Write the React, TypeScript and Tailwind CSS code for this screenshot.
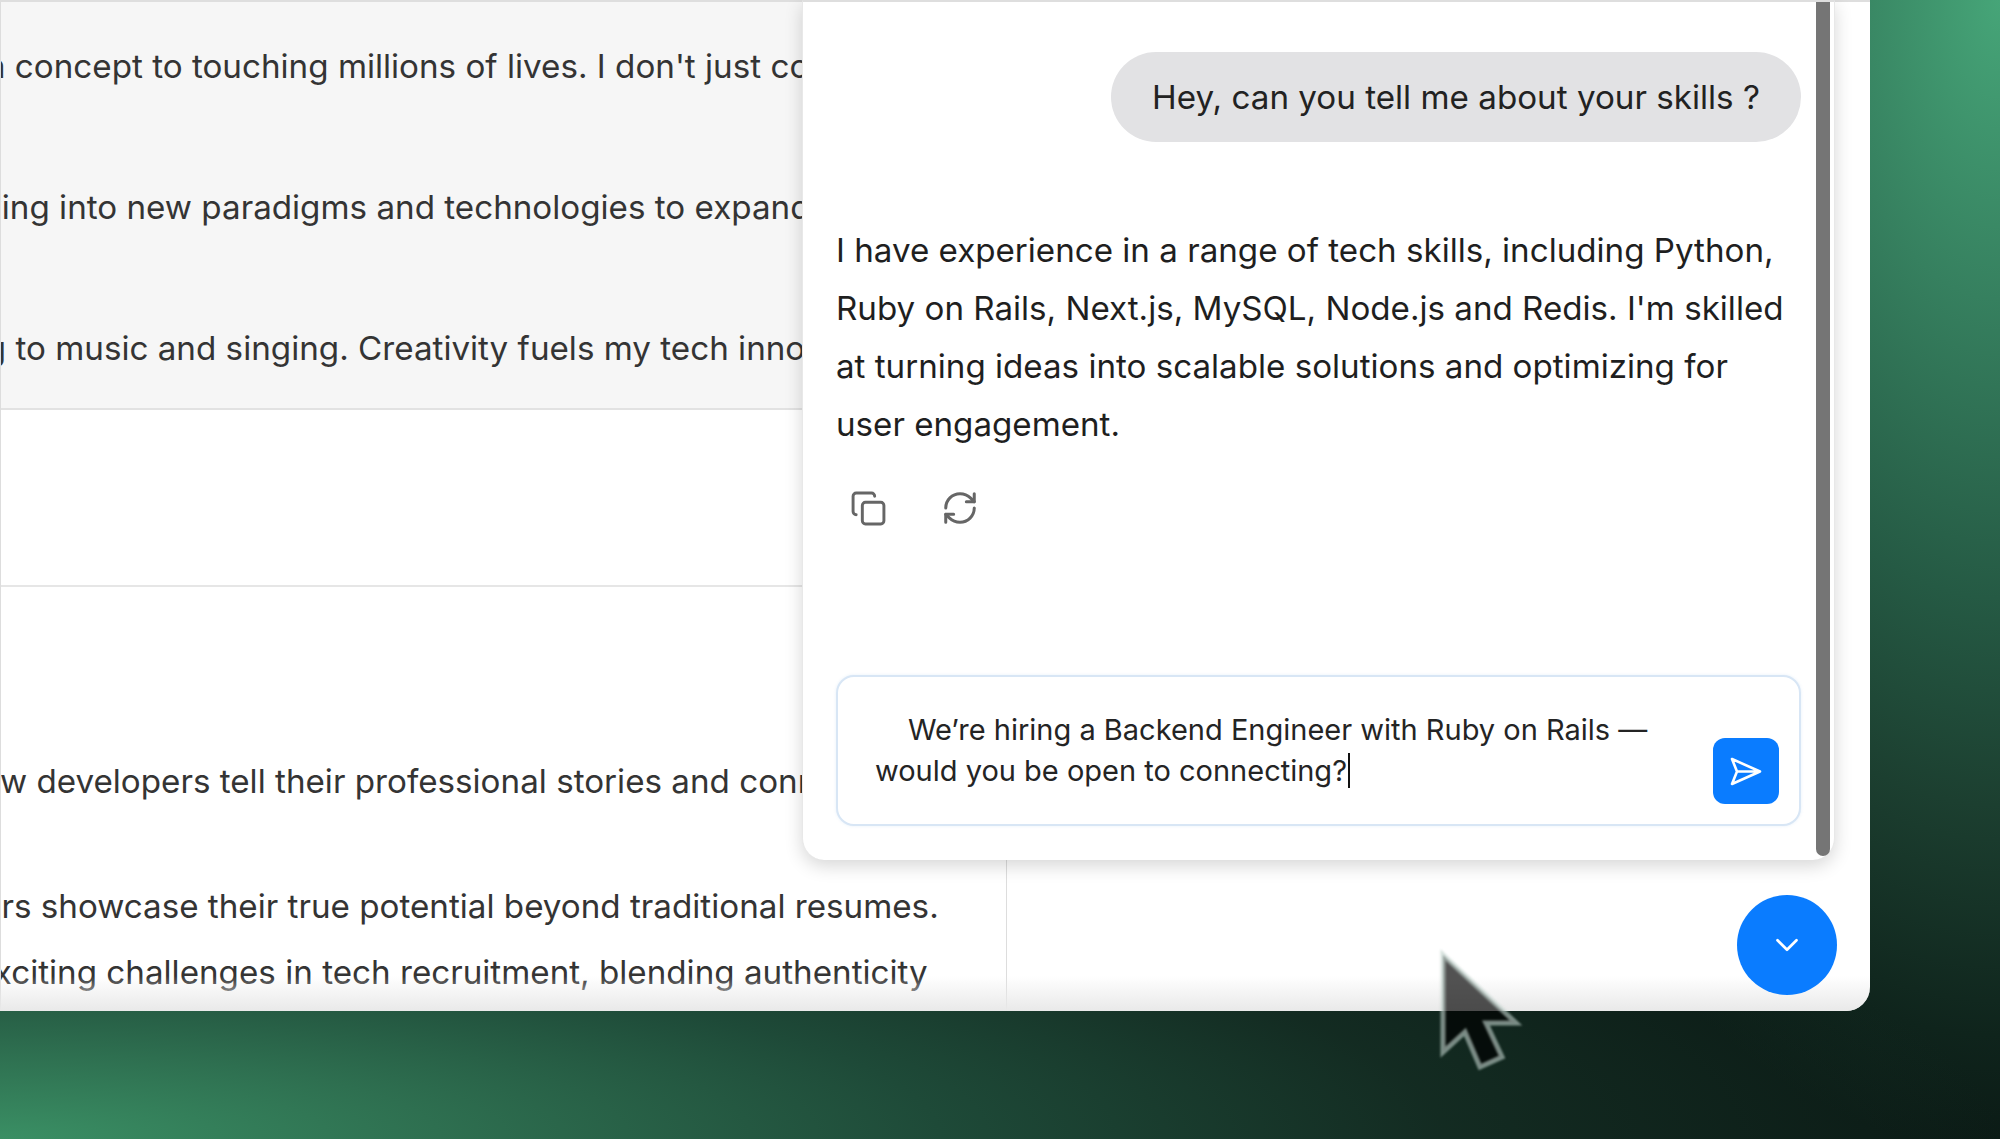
import { ChevronDown, Copy, RefreshCw } from "lucide-react";

const font = "font-['Inter','Noto_Sans',sans-serif]";

function Line({ text, className }: { text: string; className: string }) {
  return <p className={`whitespace-nowrap text-[33.2px] leading-[40px] text-[#343434] ${className}`}>{text}</p>;
}

export default function App() {
  return (
    <div className={`relative h-[1139px] w-[2000px] overflow-hidden bg-[radial-gradient(ellipse_2000px_390px_at_0px_1139px,#3a8f64_0%,#2e6f50_22%,#1e4a38_47%,rgba(20,45,35,0.9)_72%,rgba(11,26,21,0)_100%),radial-gradient(ellipse_640px_1150px_at_2000px_0px,#46a578_0%,#36805f_26%,#255a44_52%,#1c3f30_70%,#0f241c_90%,#0b1a15_100%)] ${font}`}>
      <div className="flex h-[1011px] w-[1870px] overflow-hidden rounded-br-[24px] border-t-2 border-[#dedede] bg-white">
        <div className="flex w-[1007px] shrink-0 flex-col overflow-hidden border-x border-x-[#dddddd]">
          <section className="flex h-[408px] shrink-0 flex-col border-b-2 border-[#e2e2e2] bg-[#f6f6f6] pt-[44px]">
            <Line className="ml-[-75px]" text="From concept to touching millions of lives. I don't just code" />
            <Line className="ml-[-168px] mt-[101px]" text="Always diving into new paradigms and technologies to expand" />
            <Line className="ml-[-126px] mt-[101px]" text="listening to music and singing. Creativity fuels my tech innovation" />
          </section>
          <section className="h-[177px] shrink-0 border-b-2 border-[#e6e6e6]" />
          <section className="flex flex-col pt-[174px]">
            <Line className="ml-[-40px]" text="how developers tell their professional stories and connect with teams" />
            <Line className="ml-[-194px] mt-[85px]" text="helping others showcase their true potential beyond traditional resumes." />
            <Line className="ml-[-158px] mt-[26px]" text="tackling exciting challenges in tech recruitment, blending authenticity" />
          </section>
        </div>
        <div className="flex-1" />
      </div>

      <div className="pointer-events-none absolute left-0 top-[976px] h-[35px] w-[1870px] rounded-br-[24px] bg-gradient-to-b from-[rgba(238,238,238,0)] to-[#e9e9e9]" />

      <aside className="absolute left-[802px] top-0 flex h-[860px] w-[1033px] rounded-b-[22px] border-x border-t-2 border-x-[#e8e8e8] border-t-[#dedede] bg-white shadow-[0_6px_18px_rgba(0,0,0,0.16)]">
        <div className="flex min-w-0 flex-1 flex-col pl-[33px] pr-[15px]">
          <div className="mt-[50px] flex h-[90px] w-[690px] items-center justify-center self-end rounded-[45px] bg-[#e2e2e4] pt-[1px] text-[33.2px] text-[#222222]">
            Hey, can you tell me about your skills ?
          </div>
          <p className="mt-[79px] text-[33.15px] leading-[58px] text-[#1f1f1f]">
            I have experience in a range of tech skills, including Python,
            <br />
            Ruby on Rails, Next.js, MySQL, Node.js and Redis. I'm skilled
            <br />
            at turning ideas into scalable solutions and optimizing for
            <br />
            user engagement.
          </p>
          <div className="mt-[36px] flex items-center gap-[54px] pl-[14px] text-[#666666]">
            <Copy size={37} strokeWidth={1.9} />
            <RefreshCw size={38} strokeWidth={1.9} />
          </div>
          <div className="mb-[34px] mt-auto flex h-[151px] items-center rounded-[18px] border-2 border-[#d8e6f5] bg-white pl-[37px] pr-[20px] shadow-[0_0_3px_rgba(150,190,235,0.25)]">
            <p className="mt-[-1px] flex-1 indent-[33px] text-[29px] leading-[41.5px] text-[#242424]">
              We’re hiring a Backend Engineer with Ruby on Rails —
              <br />
              would you be open to connecting?
              <span className="ml-px inline-block h-[35px] w-[2px] bg-[#111111] align-[-7px]" />
            </p>
            <button className="mt-[41px] flex h-[66px] w-[66px] shrink-0 items-center justify-center rounded-[12px] bg-[#0a7cff] text-white">
              <svg width="34" height="33" viewBox="0 0 34 33" fill="none" stroke="currentColor" strokeWidth="2.6" strokeLinejoin="round" strokeLinecap="round">
                <path d="M3 4 L31 16.5 L3 29 L8 16.5 Z M8 16.5 H31" />
              </svg>
            </button>
          </div>
        </div>
        <div className="mb-[4px] w-[14px] shrink-0 rounded-b-[7px] bg-[#757575]" />
        <div className="w-[4px] shrink-0" />
      </aside>

      <button className="absolute left-[1737px] top-[895px] flex h-[100px] w-[100px] items-center justify-center rounded-full bg-[#0a7cff] text-white">
        <ChevronDown size={38} strokeWidth={1.7} />
      </button>

      <svg className="pointer-events-none absolute left-[1430px] top-[940px] blur-[1px]" width="100" height="140" viewBox="1430 940 100 140">
        <path
          d="M1443 955 L1443 1052 L1465 1032 L1480 1067 L1502 1057 L1486 1023 L1516 1023 Z"
          fill="rgba(0,0,0,0.68)"
          stroke="rgba(190,208,202,0.62)"
          strokeWidth="5"
          strokeLinejoin="miter"
        />
      </svg>
    </div>
  );
}
